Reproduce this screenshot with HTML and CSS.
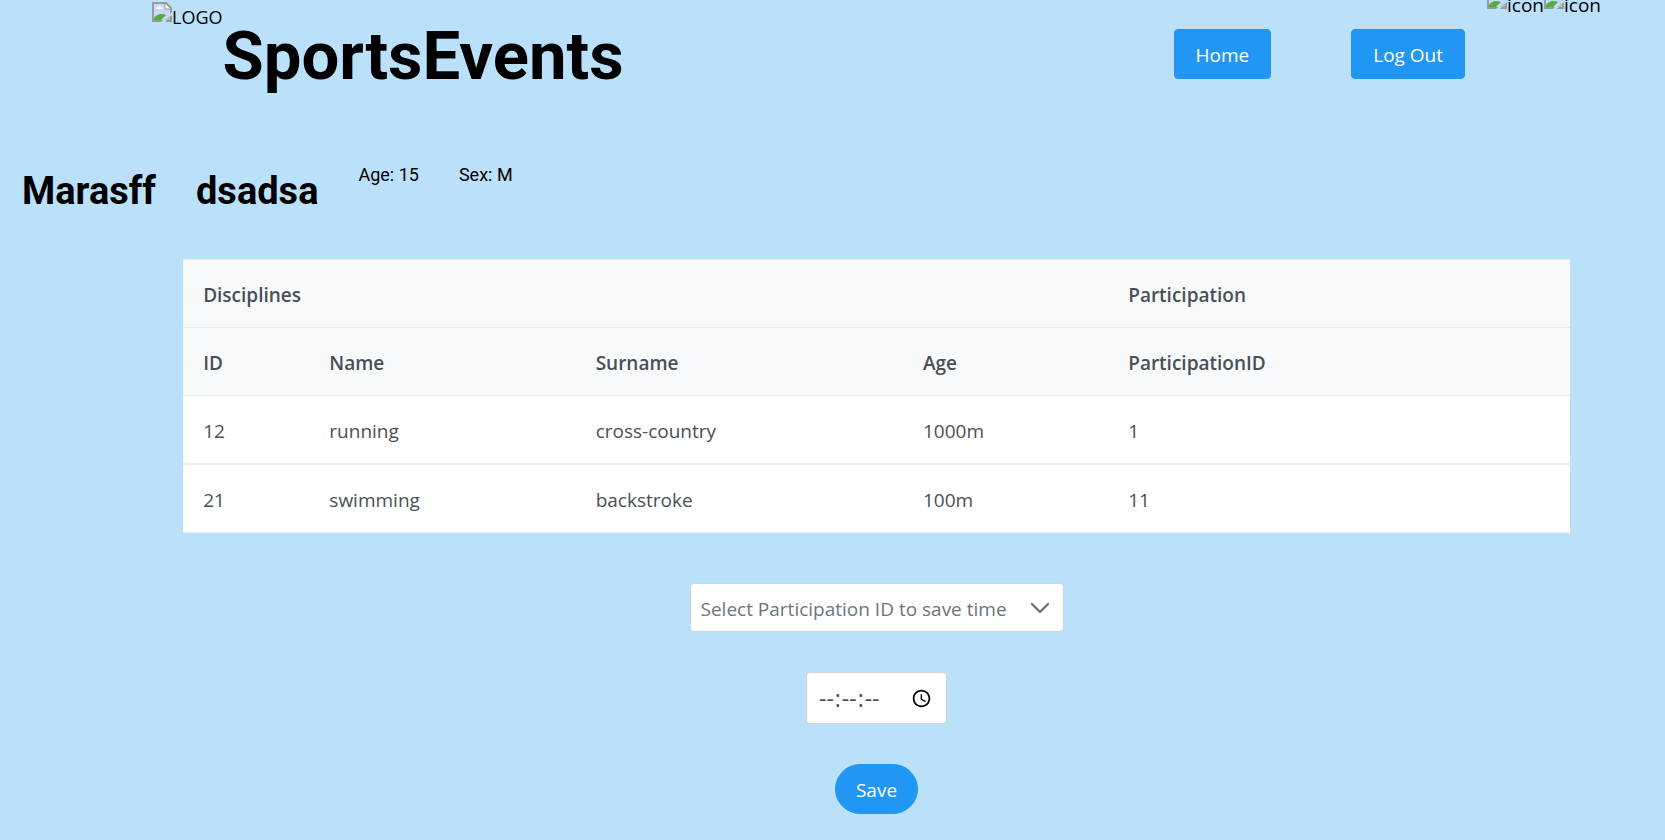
FILE: index.html
```html
<!DOCTYPE html>
<html lang="en">
<head>
<meta charset="utf-8">
<title>SportsEvents</title>
<link rel="stylesheet" href="styles.css">
</head>
<body>
<svg class="sprite" aria-hidden="true">
  <symbol id="missing" viewBox="0 0 20 20">
    <path d="M1 1h13l5 5v13H1z" fill="#fff" stroke="#9a9a9a" stroke-width="2"/>
    <path d="M2 2h12v5h4v11H2z" fill="#c6d8f8"/>
    <path d="M4 7q0-2 2-2 1-2 3 0 2 0 2 2z" fill="#fff"/>
    <path d="M2 18v-2q3-4 7-4 3 0 5 1l-5 5z" fill="#57ab3a"/>
    <path d="M13 1v6h6z" fill="#fff" stroke="#9a9a9a"/>
    <path d="M20 10v3l-7 7h-4z" fill="#bae0fa"/>
    <path d="M13 18l5-4v4z" fill="#aeb9cf"/>
  </symbol>
</svg>
<header class="topbar">
  <div class="brand">
    <span class="missing missing-logo"><svg class="missing-icon"><use href="#missing"/></svg>LOGO</span>
    <h1 class="brand-name">SportsEvents</h1>
  </div>
  <nav class="actions">
    <button class="button" type="button">Home</button>
    <button class="button" type="button">Log Out</button>
    <div class="icons">
      <span class="missing"><svg class="missing-icon"><use href="#missing"/></svg>icon</span>
      <span class="missing"><svg class="missing-icon"><use href="#missing"/></svg>icon</span>
    </div>
  </nav>
</header>
<main>
  <section class="athlete">
    <h2 class="athlete-name">Marasff</h2>
    <h2 class="athlete-name">dsadsa</h2>
    <span>Age: 15</span>
    <span>Sex: M</span>
  </section>
  <table class="results">
    <colgroup><col class="col-id"><col class="col-name"><col class="col-surname"><col class="col-age"><col></colgroup>
    <thead>
      <tr><th colspan="4">Disciplines</th><th>Participation</th></tr>
      <tr><th>ID</th><th>Name</th><th>Surname</th><th>Age</th><th>ParticipationID</th></tr>
    </thead>
    <tbody>
      <tr><td>12</td><td>running</td><td>cross-country</td><td>1000m</td><td>1</td></tr>
      <tr><td>21</td><td>swimming</td><td>backstroke</td><td>100m</td><td>11</td></tr>
    </tbody>
  </table>
  <form class="time-form">
    <div class="select-wrap">
      <select class="select" aria-label="Participation ID">
        <option>Select Participation ID to save time</option>
        <option>1</option>
        <option>11</option>
      </select>
      <svg class="chevron" viewBox="0 0 20 20" aria-hidden="true"><path d="M2 6l8 8 8-8" fill="none" stroke="#6c757d" stroke-width="2.4" stroke-linecap="round" stroke-linejoin="round"/></svg>
    </div>
    <input class="time" type="time" step="1" aria-label="Time">
    <button class="button button-round" type="button">Save</button>
  </form>
</main>
</body>
</html>
```
FILE: styles.css
```css
* { box-sizing: border-box; }
body {
  margin: 0;
  background: #bae0fa;
  color: #000;
  font: 19px/27px "Open Sans", "Noto Sans", sans-serif;
}
.sprite { display: none; }
.topbar {
  display: flex;
  justify-content: space-between;
  align-items: flex-start;
  padding: 0 64px 0 152px;
  height: 108px;
}
.brand { display: flex; }
.missing {
  display: inline-flex;
  align-items: flex-start;
  font-size: 18px;
  line-height: 30px;
}
.missing-icon { width: 20px; height: 20px; }
.missing-logo { margin-top: 2px; }
.brand-name {
  margin: 16px 0 0;
  font: 700 67px/80px Roboto, sans-serif;
}
.actions { display: flex; align-items: flex-start; }
.actions .button { margin: 29px 0 0 80px; padding: 2px 21px 0; }
.icons { display: flex; margin: -11px 0 0 22px; }
.icons .missing { font-size: 19px; line-height: 32px; }
.button {
  height: 50px;
  padding: 2px 20px 0;
  border: 1px solid #2196f3;
  border-radius: 4px;
  background: #2196f3;
  color: #fff;
  font: 19px/27px "Open Sans", sans-serif;
}
.button-round { border-radius: 32px; }
.athlete {
  display: flex;
  gap: 40px;
  padding: 52px 22px 0;
  font: 18px/30px Roboto, sans-serif;
}
.athlete-name {
  margin: 7px 0 0;
  font-size: 38px;
  line-height: 48px;
}
.results {
  width: 83.3%;
  margin: 44px auto 0;
  margin-left: 11%;
  border-collapse: separate;
  border-spacing: 0;
  border-top: 1px solid #e9ecef;
  table-layout: fixed;
  background: #fff;
  color: #495057;
}
.col-id { width: 9.1%; }
.col-name { width: 19.2%; }
.col-surname { width: 23.6%; }
.col-age { width: 14.8%; }
.results th, .results td {
  padding: 22px 20px 18px;
  border-bottom: 1px solid #e9ecef;
  text-align: left;
}
.results th { background: #f8f9fa; font-weight: 600; }
.results tbody tr:first-child td { border-bottom-width: 2px; }
.time-form {
  display: flex;
  flex-direction: column;
  align-items: center;
  gap: 40px;
  padding: 50px 0 26px 88px;
}
.select-wrap { position: relative; }
.select, .time {
  display: block;
  border: 1px solid #ced4da;
  border-radius: 4px;
  background: #fff;
  font: 19px/27px "Open Sans", sans-serif;
}
.select {
  appearance: none;
  width: 374px;
  height: 49px;
  padding: 3px 10px 0;
  color: #6c757d;
}
.chevron {
  position: absolute;
  top: 15px;
  right: 14px;
  width: 20px;
  height: 20px;
  pointer-events: none;
}
.time {
  width: 141px;
  height: 52px;
  padding: 1px 11px 0;
  color: #495057;
  font-size: 23px;
}
.time::-webkit-datetime-edit-ampm-field { display: none; }
.time::-webkit-calendar-picker-indicator { width: 21px; height: 21px; }
```
